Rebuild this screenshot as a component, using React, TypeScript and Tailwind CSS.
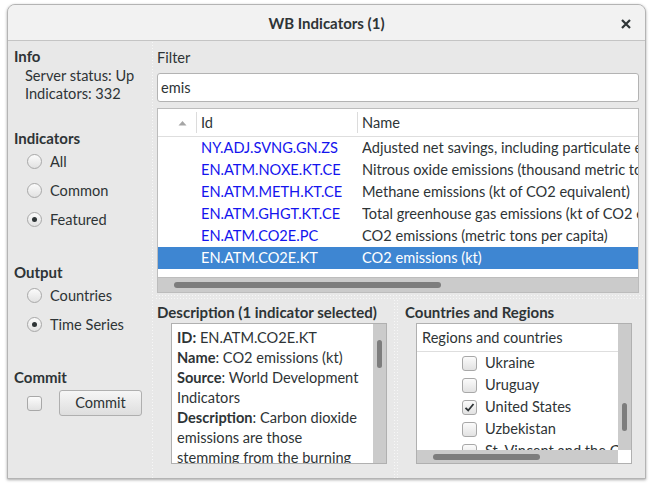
import React from "react";

function Radio({ checked, label }: { checked?: boolean; label: string }) {
  return (
    <div className="h-[29px] flex items-center pl-[13px]">
      <div className="w-[15px] h-[15px] rounded-full border border-[#a8a8a8] bg-gradient-to-b from-[#fbfbfb] to-[#e2e2e2] flex items-center justify-center">
        {checked && <div className="w-[5px] h-[5px] rounded-full bg-[#2e3436]" />}
      </div>
      <span className="ml-[8px]">{label}</span>
    </div>
  );
}

function Check({ checked }: { checked?: boolean }) {
  return (
    <div className="w-[15px] h-[15px] shrink-0 rounded-[3px] border border-[#a8a8a8] bg-gradient-to-b from-[#fbfbfb] to-[#e2e2e2] flex items-center justify-center">
      {checked && (
        <svg width="11" height="11" viewBox="0 0 11 11">
          <path d="M1.5 5.8 L4.2 8.5 L9.5 2" fill="none" stroke="#2e3436" strokeWidth="1.8" />
        </svg>
      )}
    </div>
  );
}

const dots =
  "bg-[radial-gradient(#f7f7f7_0.8px,transparent_0.9px)] bg-[length:3px_3px]";

const rows = [
  ["NY.ADJ.SVNG.GN.ZS", "Adjusted net savings, including particulate emission damage"],
  ["EN.ATM.NOXE.KT.CE", "Nitrous oxide emissions (thousand metric tons of CO2 equivalent)"],
  ["EN.ATM.METH.KT.CE", "Methane emissions (kt of CO2 equivalent)"],
  ["EN.ATM.GHGT.KT.CE", "Total greenhouse gas emissions (kt of CO2 equivalent)"],
  ["EN.ATM.CO2E.PC", "CO2 emissions (metric tons per capita)"],
  ["EN.ATM.CO2E.KT", "CO2 emissions (kt)"],
];

export default function App() {
  return (
    <div className="w-[653px] h-[489px] bg-white pt-[4px] pl-[7px] font-[family-name:Lato,sans-serif] text-[14.6px] leading-[18px] text-[#2e3436]">
      <div className="w-[639px] h-[475px] flex flex-col rounded-t-[8px] border border-[#b4b4b4] shadow-[0_1px_3px_rgba(0,0,0,0.35)] overflow-hidden bg-[#e8e8e8]">
        {/* title bar */}
        <div className="h-[36px] shrink-0 bg-[#f2f2f2] border-b border-[#c4c4c4] relative flex items-center justify-center">
          <span className="font-bold text-[15px] text-[#2e3436]">WB Indicators (1)</span>
          <div className="absolute right-[14px] top-[14px]">
            <svg width="10" height="10" viewBox="0 0 10 10">
              <path d="M1 1 L9 9 M9 1 L1 9" stroke="#2e3436" strokeWidth="2.2" />
            </svg>
          </div>
        </div>
        {/* body */}
        <div className="flex flex-1 min-h-0">
          {/* left panel */}
          <div className="w-[143px] shrink-0 pl-[6px] pt-[6px]">
            <div className="font-bold text-[15px]">Info</div>
            <div className="pl-[11px] mt-[2px]">
              <div>Server status: Up</div>
              <div>Indicators: 332</div>
            </div>
            <div className="font-bold text-[15px] mt-[26px]">Indicators</div>
            <Radio label="All" />
            <Radio label="Common" />
            <Radio label="Featured" checked />
            <div className="font-bold text-[15px] mt-[29px]">Output</div>
            <Radio label="Countries" />
            <Radio label="Time Series" checked />
            <div className="font-bold text-[15px] mt-[29px]">Commit</div>
            <div className="flex items-center mt-[4px] pl-[13px]">
              <Check />
              <button className="ml-[17px] w-[83px] h-[26px] rounded-[3px] border border-[#afafaf] bg-gradient-to-b from-[#f6f6f6] to-[#dedede] text-[#2e3436] flex items-center justify-center">
                Commit
              </button>
            </div>
          </div>
          {/* splitter */}
          <div className={`w-[4px] shrink-0 ${dots}`} />
          {/* right panel */}
          <div className="flex-1 min-w-0 flex flex-col">
            <div className="pl-[2px] pr-[6px] pt-[8px] flex flex-col">
              <div>Filter</div>
              <div className="mt-[6px] h-[29px] rounded-[3px] border border-[#b3b3b3] bg-white flex items-center pl-[3px]">
                emis
              </div>
              {/* table */}
              <div className="mt-[6px] h-[185px] border border-[#bcbcbc] bg-white flex flex-col overflow-hidden">
                <div className="h-[28px] shrink-0 flex border-b border-[#dedede]">
                  <div className="w-[39px] shrink-0 border-r border-[#dcdcdc] my-[3px] flex items-center justify-center pl-[10px]">
                    <svg width="9" height="6" viewBox="0 0 9 6">
                      <path d="M0.5 5.5 L4.5 1 L8.5 5.5 Z" fill="#a5a5a5" />
                    </svg>
                  </div>
                  <div className="w-[161px] shrink-0 border-r border-[#dcdcdc] my-[3px] flex items-center pl-[4px]">Id</div>
                  <div className="flex-1 flex items-center pl-[4px] whitespace-nowrap">Name</div>
                </div>
                {rows.map(([id, name], i) => {
                  const sel = i === rows.length - 1;
                  return (
                    <div
                      key={id}
                      className={`h-[22px] shrink-0 flex items-center whitespace-nowrap overflow-hidden ${sel ? "bg-[#3e86d2] text-white" : ""}`}
                    >
                      <div className="w-[43px] shrink-0" />
                      <div className={`w-[161px] shrink-0 ${sel ? "text-white" : "text-[#1414ee]"}`}>{id}</div>
                      <div className="flex-1 overflow-hidden">{name}</div>
                    </div>
                  );
                })}
                <div className="flex-1" />
                <div className="h-[15px] shrink-0 bg-[#cbcbcb] border-t border-[#bdbdbd] flex items-center pl-[16px]">
                  <div className="w-[267px] h-[6px] rounded-full bg-[#7d7d7d]" />
                </div>
              </div>
            </div>
            {/* horizontal splitter */}
            <div className={`h-[5px] shrink-0 mt-[1px] ${dots}`} />
            {/* bottom */}
            <div className="flex flex-1 min-h-0">
              <div className="w-[238px] shrink-0 pl-[2px] pt-[4px]">
                <div className="font-bold text-[15px]">Description (1 indicator selected)</div>
                <div className="ml-[14px] mt-[2px] w-[216px] h-[141px] border border-[#b0b0b0] bg-white flex overflow-hidden">
                  <div className="flex-1 pl-[5px] pt-[4px] leading-[20px] whitespace-nowrap overflow-hidden">
                    <div><b>ID:</b> EN.ATM.CO2E.KT</div>
                    <div><b>Name</b>: CO2 emissions (kt)</div>
                    <div><b>Source</b>: World Development</div>
                    <div>Indicators</div>
                    <div><b>Description</b>: Carbon dioxide</div>
                    <div>emissions are those</div>
                    <div>stemming from the burning</div>
                  </div>
                  <div className="w-[13px] shrink-0 bg-[#cbcbcb] flex justify-center pt-[16px]">
                    <div className="w-[5px] h-[28px] rounded-full bg-[#7d7d7d]" />
                  </div>
                </div>
              </div>
              <div className={`w-[7px] shrink-0 ${dots}`} />
              <div className="flex-1 pl-[5px] pt-[4px]">
                <div className="font-bold text-[15px]">Countries and Regions</div>
                <div className="ml-[11px] mt-[2px] w-[216px] h-[141px] border border-[#b0b0b0] bg-white flex flex-col overflow-hidden">
                  <div className="flex flex-1 min-h-0">
                    <div className="flex-1 min-w-0 flex flex-col overflow-hidden">
                      <div className="h-[28px] shrink-0 border-b border-[#dedede] flex items-center pl-[5px] whitespace-nowrap">
                        Regions and countries
                      </div>
                      {[
                        ["Ukraine", false],
                        ["Uruguay", false],
                        ["United States", true],
                        ["Uzbekistan", false],
                        ["St. Vincent and the Grenadines", false],
                      ].map(([name, c]) => (
                        <div key={name as string} className="h-[22px] shrink-0 flex items-center pl-[45px] whitespace-nowrap">
                          <Check checked={c as boolean} />
                          <span className="ml-[8px]">{name as string}</span>
                        </div>
                      ))}
                    </div>
                    <div className="w-[13px] shrink-0 bg-[#cbcbcb] flex justify-center pt-[79px]">
                      <div className="w-[5px] h-[28px] rounded-full bg-[#7d7d7d]" />
                    </div>
                  </div>
                  <div className="h-[13px] shrink-0 flex">
                    <div className="flex-1 bg-[#cbcbcb] flex items-center pl-[16px]">
                      <div className="w-[107px] h-[6px] rounded-full bg-[#7d7d7d]" />
                    </div>
                    <div className="w-[13px] bg-white" />
                  </div>
                </div>
              </div>
            </div>
          </div>
        </div>
      </div>
    </div>
  );
}
